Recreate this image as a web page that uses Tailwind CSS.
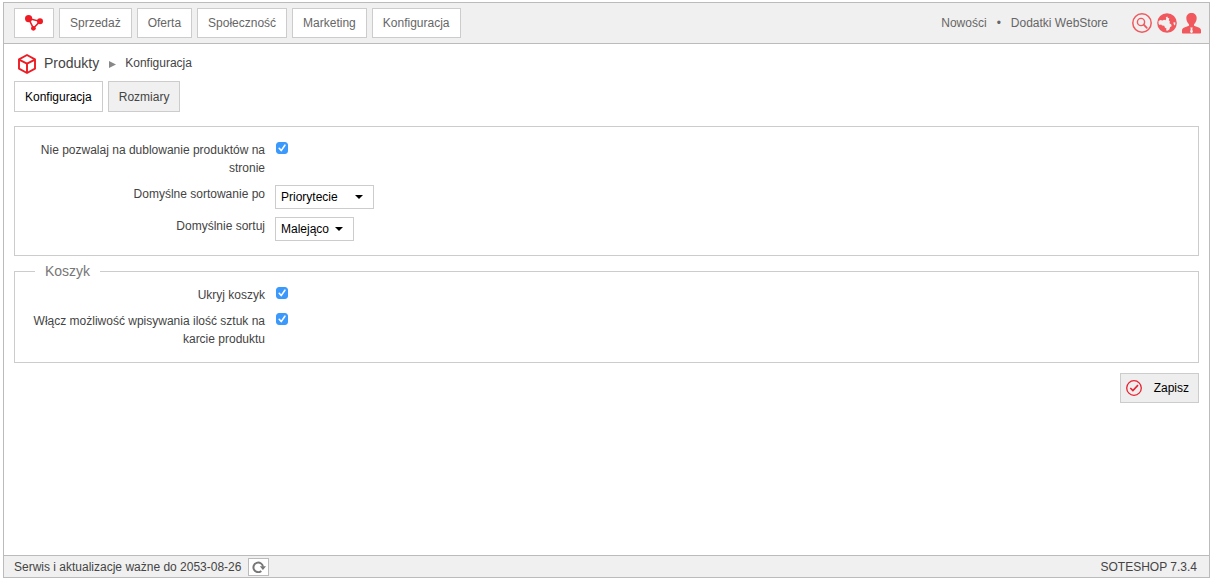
<!DOCTYPE html>
<html lang="pl">
<head>
  <meta charset="utf-8">
  <meta name="viewport" content="width=device-width, initial-scale=1">
  <title>Produkty - Konfiguracja</title>
  <script src="https://cdn.jsdelivr.net/npm/@tailwindcss/browser@4"></script>
</head>
<body class="bg-white font-['Liberation_Sans',Arial,sans-serif] text-xs text-[#444]">
  <div class="min-h-screen flex flex-col pt-[2px] pl-[3px] pr-[2px] pb-1">
    <div class="grow flex flex-col border border-[#bbb]">

      <header class="flex items-center justify-between px-[10px] py-[5px] bg-[#f0f0f0] border-b border-[#bbb]">
        <nav class="flex gap-[5px] text-[#666]">
          <a href="#" aria-label="Pulpit" class="flex items-center justify-center w-10 h-[30px] bg-white border border-[#ccc]">
            <svg class="w-[18px] h-4" viewBox="0 0 18 16" fill="#ed1c24">
              <path d="M3.5 3.5 15 6.3 8.4 13.2Z" fill="none" stroke="#ed1c24" stroke-width="1.5" />
              <circle cx="3.6" cy="3.6" r="3.6" />
              <circle cx="15" cy="6.2" r="3" />
              <circle cx="8.4" cy="13.3" r="2.4" />
            </svg>
          </a>
          <a href="#" class="flex items-center h-[30px] px-[10px] bg-white border border-[#ccc]">Sprzedaż</a>
          <a href="#" class="flex items-center h-[30px] px-[10px] bg-white border border-[#ccc]">Oferta</a>
          <a href="#" class="flex items-center h-[30px] px-[10px] bg-white border border-[#ccc]">Społeczność</a>
          <a href="#" class="flex items-center h-[30px] px-[10px] bg-white border border-[#ccc]">Marketing</a>
          <a href="#" class="flex items-center h-[30px] px-[10px] bg-white border border-[#ccc]">Konfiguracja</a>
        </nav>

        <div class="flex items-center text-[#666]">
          <a href="#">Nowości</a>
          <span class="px-[10px]">•</span>
          <a href="#">Dodatki WebStore</a>
          <div class="flex items-center gap-[5px] pl-6 -mr-[2px]">
            <a href="#" aria-label="Szukaj">
              <svg class="size-5" viewBox="0 0 20 20" fill="none" stroke="#f0585d">
                <circle cx="10" cy="10" r="9.2" stroke-width="1.5" />
                <circle cx="9" cy="9" r="3.6" stroke-width="1.4" />
                <path d="m11.7 11.7 3.1 3.1" stroke-width="1.8" stroke-linecap="round" />
              </svg>
            </a>
            <a href="#" aria-label="Język">
              <svg class="size-5" viewBox="0 0 20 20">
                <circle cx="10" cy="10" r="9.8" fill="#f0585d" />
                <path d="M1.500 8.300 3.200 7 5.500 7.600 7 6.700 8.500 7.300 9.300 5.800 8.800 4.600 10.300 3.500 10.900 4.900 12.300 5.300 11.800 7.300 12.900 8.400 12.500 10.200 14.300 11.400 14.600 13.200 13.200 14 12.300 16.400 10.500 17.700 9 17.200 9.500 15.600 8 14.700 7.200 12.800 5 12.600 4.200 11.400 2.300 11.900 1.500 10.600Z" fill="#f0f0f0" />
                <path d="M16.300 9.500 18.300 9.200 18.400 11.200 17.200 12.400Z" fill="#f0f0f0" />
              </svg>
            </a>
            <a href="#" aria-label="Konto">
              <svg class="w-[19px] h-[21px]" viewBox="0 0 18 21" preserveAspectRatio="none" fill="#f0585d">
                <path d="M9 0c3 0 4.900 2.100 4.900 5.100 0 2.600-1 4.900-2.500 6.100v1.600l4.400 1.600c1.500.6 2.200 1.500 2.200 3v2.200c0 .6-.4 1-1 1H1c-.6 0-1-.4-1-1v-2.200c0-1.500.7-2.400 2.200-3l4.400-1.600v-1.600C5.100 10 4.100 7.700 4.100 5.100 4.100 2.100 6 0 9 0Z" />
                <path d="M7.800 14.500h2.400l-.5 1.400.7 3L9 20.200l-1.400-1.300.7-3Z" fill="#f0f0f0" />
              </svg>
            </a>
          </div>
        </div>
      </header>

      <main class="grow px-[10px]">
        <div class="flex items-center h-[37px] pl-1">
          <svg class="w-[18px] h-5 mt-[2px]" viewBox="0 0 18 20" fill="none" stroke="#ed1c24" stroke-width="1.9" stroke-linejoin="round">
            <path d="M9 1 17 5.300V14.700L9 19 1 14.700V5.300Z" />
            <path d="M1.500 5.800 9 9.700l7.500-3.900M9 9.700V18.500" />
          </svg>
          <h1 class="pl-2 text-sm">Produkty</h1>
          <svg class="w-[7px] h-[7px] ml-[10px] mr-[9px] mt-1" viewBox="0 0 7 7" fill="#888"><path d="M0 0 7 3.500 0 7Z" /></svg>
          <span>Konfiguracja</span>
        </div>

        <nav class="flex gap-[5px]">
          <a href="#" class="flex items-center h-[31px] px-[10px] bg-white border border-[#ccc] text-black">Konfiguracja</a>
          <a href="#" class="flex items-center h-[31px] px-[10px] bg-[#f0f0f0] border border-[#ccc]">Rozmiary</a>
        </nav>

        <form>
          <fieldset class="flex flex-col gap-2 mt-[14px] py-[14px] border border-[#ccc] leading-[18px]">
            <div class="flex gap-[10px]">
              <label for="dublowanie" class="w-[250px] pl-4 text-right">Nie pozwalaj na dublowanie produktów na stronie</label>
              <span class="relative size-3 mt-px ml-px">
                <input type="checkbox" id="dublowanie" checked class="peer block appearance-none size-3 rounded-[3px] border border-[#3b99fc] checked:bg-[#3b99fc]">
                <svg class="absolute inset-0 size-3 pointer-events-none hidden peer-checked:block" viewBox="0 0 12 12" fill="none" stroke="#fff" stroke-width="1.6" stroke-linecap="round" stroke-linejoin="round"><path d="M3.200 6.300 5.200 8.600 8.900 3.200" /></svg>
              </span>
            </div>
            <div class="flex gap-[10px]">
              <label for="sortowanie" class="w-[250px] text-right">Domyślne sortowanie po</label>
              <span class="relative">
                <select id="sortowanie" class="block appearance-none w-[99px] h-6 pl-[5px] bg-white border border-[#ccc] text-black">
                  <option>Priorytecie</option>
                  <option>Nazwie</option>
                  <option>Cenie</option>
                </select>
                <svg class="absolute right-[11px] top-[10px] w-2 h-1 pointer-events-none" viewBox="0 0 8 4"><path d="M0 0H8L4 4Z" /></svg>
              </span>
            </div>
            <div class="flex gap-[10px]">
              <label for="kierunek" class="w-[250px] text-right">Domyślnie sortuj</label>
              <span class="relative">
                <select id="kierunek" class="block appearance-none w-[79px] h-6 pl-[5px] bg-white border border-[#ccc] text-black">
                  <option>Malejąco</option>
                  <option>Rosnąco</option>
                </select>
                <svg class="absolute right-[11px] top-[10px] w-2 h-1 pointer-events-none" viewBox="0 0 8 4"><path d="M0 0H8L4 4Z" /></svg>
              </span>
            </div>
          </fieldset>

          <fieldset class="mt-[6px] pt-[6px] pb-[14px] border border-[#ccc] leading-[18px]">
            <legend class="ml-5 px-[10px] text-sm leading-[18px] text-[#777]">Koszyk</legend>
            <div class="flex flex-col gap-2">
              <div class="flex gap-[10px]">
                <label for="ukryj" class="w-[250px] text-right">Ukryj koszyk</label>
                <span class="relative size-3 mt-px ml-px">
                  <input type="checkbox" id="ukryj" checked class="peer block appearance-none size-3 rounded-[3px] border border-[#3b99fc] checked:bg-[#3b99fc]">
                  <svg class="absolute inset-0 size-3 pointer-events-none hidden peer-checked:block" viewBox="0 0 12 12" fill="none" stroke="#fff" stroke-width="1.6" stroke-linecap="round" stroke-linejoin="round"><path d="M3.200 6.300 5.200 8.600 8.900 3.200" /></svg>
                </span>
              </div>
              <div class="flex gap-[10px]">
                <label for="ilosc" class="w-[250px] pl-4 text-right">Włącz możliwość wpisywania ilość sztuk na karcie produktu</label>
                <span class="relative size-3 mt-px ml-px">
                  <input type="checkbox" id="ilosc" checked class="peer block appearance-none size-3 rounded-[3px] border border-[#3b99fc] checked:bg-[#3b99fc]">
                  <svg class="absolute inset-0 size-3 pointer-events-none hidden peer-checked:block" viewBox="0 0 12 12" fill="none" stroke="#fff" stroke-width="1.6" stroke-linecap="round" stroke-linejoin="round"><path d="M3.200 6.300 5.200 8.600 8.900 3.200" /></svg>
                </span>
              </div>
            </div>
          </fieldset>

          <div class="flex justify-end mt-[10px]">
            <button type="submit" class="flex items-center gap-3 h-[30px] pl-[5px] pr-[9px] bg-[#eee] border border-[#ccc] text-black">
              <svg class="size-4" viewBox="0 0 16 16" fill="none" stroke="#e8212f">
                <circle cx="8" cy="8" r="7.300" stroke-width="1.300" />
                <path d="M4.300 8 6.900 10.600 12 5.100" stroke-width="1.600" />
              </svg>
              Zapisz
            </button>
          </div>
        </form>
      </main>

      <footer class="flex items-center justify-between h-[22px] pl-[10px] pr-3 bg-[#f0f0f0] border-t border-[#bbb]">
        <div class="flex items-center gap-[7px]">
          <span>Serwis i aktualizacje ważne do 2053-08-26</span>
          <button type="button" aria-label="Odśwież" class="flex items-center justify-center w-[21px] h-[18px] bg-white border border-[#bbb]">
            <svg class="w-[14px] h-3" viewBox="0 0 14 12">
              <path d="M9.300 10.100A4.800 4.800 0 1 1 11 5.600" fill="none" stroke="#777" stroke-width="2" />
              <path d="M7.800 5.300H14L10.900 9Z" fill="#777" />
            </svg>
          </button>
        </div>
        <span>SOTESHOP 7.3.4</span>
      </footer>
    </div>
  </div>
</body>
</html>
